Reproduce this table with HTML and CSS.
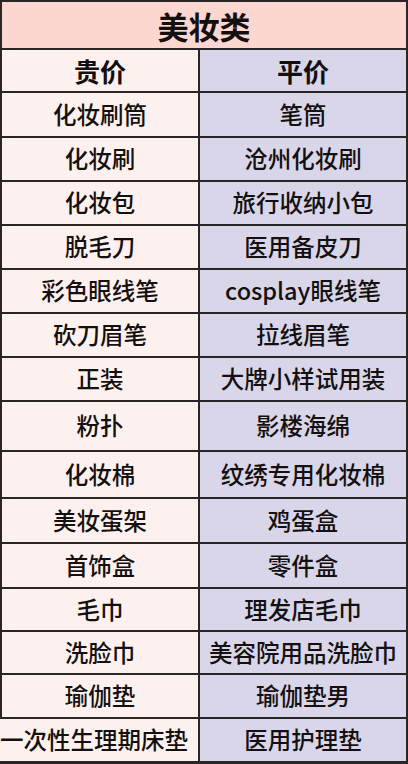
FILE: index.html
```html
<!DOCTYPE html>
<html lang="zh">
<head>
<meta charset="utf-8">
<link rel="stylesheet" href="styles.css">
</head>
<body>
<div class="table">
  <div class="title">美妆类</div>
  <div class="cell left head">贵价</div><div class="cell right head">平价</div>
  <div class="cell left">化妆刷筒</div><div class="cell right">笔筒</div>
  <div class="cell left">化妆刷</div><div class="cell right">沧州化妆刷</div>
  <div class="cell left">化妆包</div><div class="cell right">旅行收纳小包</div>
  <div class="cell left">脱毛刀</div><div class="cell right">医用备皮刀</div>
  <div class="cell left">彩色眼线笔</div><div class="cell right">cosplay眼线笔</div>
  <div class="cell left">砍刀眉笔</div><div class="cell right">拉线眉笔</div>
  <div class="cell left">正装</div><div class="cell right">大牌小样试用装</div>
  <div class="cell left">粉扑</div><div class="cell right">影楼海绵</div>
  <div class="cell left">化妆棉</div><div class="cell right">纹绣专用化妆棉</div>
  <div class="cell left">美妆蛋架</div><div class="cell right">鸡蛋盒</div>
  <div class="cell left">首饰盒</div><div class="cell right">零件盒</div>
  <div class="cell left">毛巾</div><div class="cell right">理发店毛巾</div>
  <div class="cell left">洗脸巾</div><div class="cell right">美容院用品洗脸巾</div>
  <div class="cell left">瑜伽垫</div><div class="cell right">瑜伽垫男</div>
  <div class="cell left wide">一次性生理期床垫</div><div class="cell right">医用护理垫</div>
</div>
</body>
</html>
```

FILE: styles.css
```css
html, body {
  margin: 0;
  padding: 0;
  background: #2b2626;
}
body {
  width: 408px;
  height: 764px;
  overflow: hidden;
  font-family: "Noto Sans CJK SC", "Noto Sans", sans-serif;
  color: #141010;
}
.table {
  display: grid;
  grid-template-columns: 196px 206px;
  grid-template-rows: 46px 41px 43px 42px 42px 42px 42px 42px 42px 48px 45px 43px 43px 41px 41px 42px 42px;
  gap: 2px;
  padding: 2px 2px 3px 2px;
  background: #2b2626;
  width: 408px;
  box-sizing: border-box;
}
.title {
  grid-column: 1 / 3;
  background: #fcd6d1;
  font-size: 31px;
  font-weight: 700;
  display: flex;
  align-items: center;
  justify-content: center;
  line-height: 1;
}
.cell {
  display: flex;
  align-items: center;
  justify-content: center;
  font-size: 23.5px;
  font-weight: 500;
  line-height: 1;
  white-space: nowrap;
  overflow: visible;
}
.left {
  background: #fdf1ef;
}
.right {
  background: #d9d6ea;
}
.head {
  font-size: 26px;
  font-weight: 700;
}
.wide {
  justify-content: flex-start;
  padding-left: 0;
  margin-left: -2px;
}
```
